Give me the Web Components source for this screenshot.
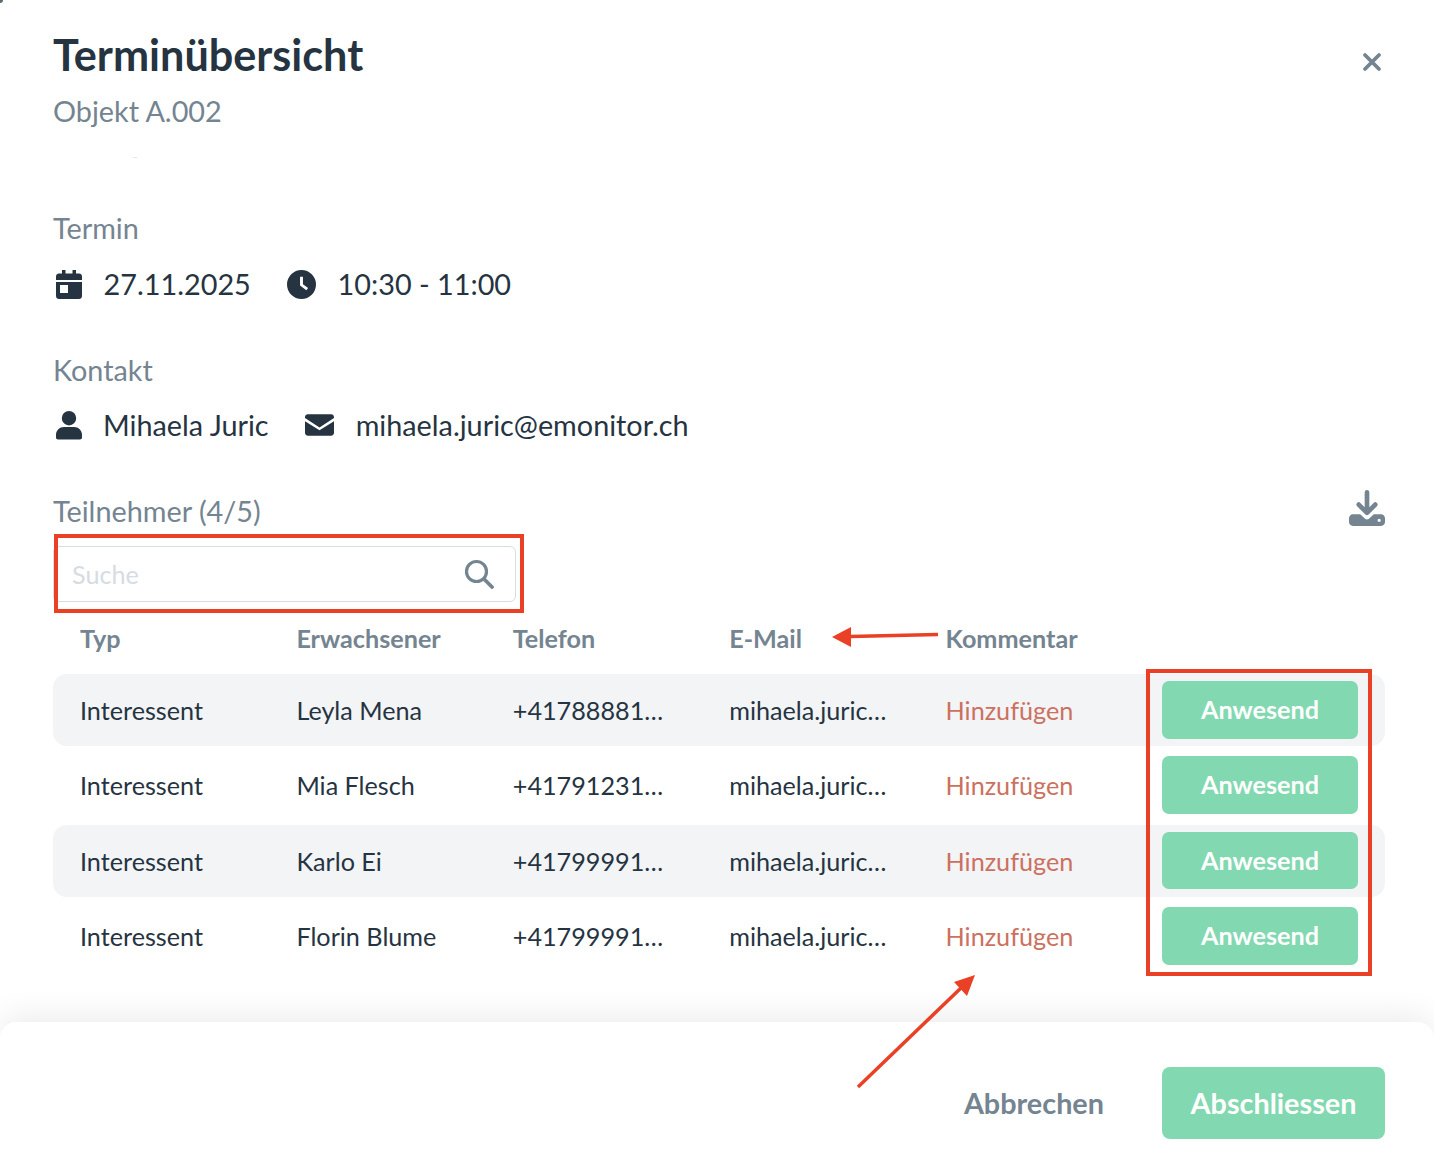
<!DOCTYPE html>
<html lang="de"><head><meta charset="utf-8"><title>Terminübersicht</title>
<style>
html,body{margin:0;padding:0;background:#fff}
body{font-family:Lato,"Open Sans",sans-serif;color:#263442;width:1434px;height:1176px;overflow:hidden}
</style></head><body>
<termin-dialog></termin-dialog>
<template id="t-dialog">
<style>
:host{display:block;position:relative;width:1434px;height:1176px;overflow:hidden;background:#fff}
.body{padding:0 49px 0 53px;display:flex;flex-direction:column}
header{display:flex;justify-content:space-between;align-items:flex-start;padding-top:27px}
h1{margin:0;font-size:43.200px;line-height:54px;font-weight:700;color:#263442}
.sub{font-size:28.800px;line-height:36px;color:#748491;margin-top:12px}
.close{margin:23px 1px 0 0;width:24px;height:24px;display:block}
.label{font-size:28.800px;line-height:36px;color:#748491}
.info{display:flex;align-items:center;font-size:28.800px;line-height:40px;color:#263442}
.info svg{display:block;flex:none}
.sec1{margin-top:81px}
.sec2{margin-top:48px}
.sec3{margin-top:48px;display:flex;justify-content:space-between;align-items:center}
.rows{display:flex;flex-direction:column;gap:3.400px}
footer{position:absolute;left:0;right:0;top:1022px;bottom:0;background:#fff;border-radius:16px 16px 0 0;box-shadow:0 -8px 30px rgba(0,0,0,.07);display:flex;justify-content:flex-end;align-items:flex-start;padding:45px 49px 0 0;gap:58px}
.ab{font-size:28.800px;font-weight:700;color:#748491;line-height:72px}
.go{width:223px;height:72px;background:#82d8b0;border-radius:8px;color:#fff;font-size:28.800px;font-weight:700;line-height:72px;text-align:center}
.note{position:absolute;border:4px solid #ea4025;box-sizing:border-box;pointer-events:none}
.arrows{position:absolute;left:0;top:0;pointer-events:none}
.speck{position:absolute;left:133px;top:157px;width:4px;height:1px;background:#e6e6e6}
.corner{position:absolute;left:0;top:0;width:3px;height:3px;background:#5a6a76;border-bottom-right-radius:3px}
</style>
<div class="body">
<header><div><h1>Terminübersicht</h1><div class="sub">Objekt A.002</div></div>
<svg class="close" viewBox="0 0 24 24"><path d="M5 5L19 19M19 5L5 19" stroke="#748491" stroke-width="3.800" stroke-linecap="round" fill="none"/></svg></header>
<div class="sec1 label">Termin</div>
<div class="info" style="margin-top:18px">
<svg width="26" height="29" viewBox="0 0 26 29" style="margin-left:3px"><path fill="#263442" fill-rule="evenodd" d="M6 0h3.500v3.500h7V0H20v3.500h3c1.700 0 3 1.300 3 3V10H0V6.500c0-1.700 1.300-3 3-3h3zM0 12h26v14c0 1.700-1.300 3-3 3H3c-1.700 0-3-1.300-3-3zM4 15v8h8v-8z"/></svg>
<span style="margin-left:21.600px">27.11.2025</span>
<svg width="29" height="29" viewBox="0 0 30 30" style="margin-left:36.400px"><path fill="#263442" fill-rule="evenodd" d="M15 0a15 15 0 1 1 0 30a15 15 0 0 1 0-30zM13.500 7v9l6.500 5 1.800-2.300-5.300-4V7z"/></svg>
<span style="margin-left:21.400px">10:30 - 11:00</span></div>
<div class="sec2 label">Kontakt</div>
<div class="info" style="margin-top:17px">
<svg width="26" height="30" viewBox="0 0 26 30" style="margin-left:3px"><path fill="#263442" d="M13 1a7.200 7.200 0 1 1 0 14.400a7.200 7.200 0 0 1 0-14.400zM8 17h10c4.500 0 8 3.500 8 7.800V27.500c0 1-.8 2-2 2H2c-1.200 0-2-1-2-2v-2.700C0 20.500 3.500 17 8 17z"/></svg>
<span style="margin-left:21px">Mihaela Juric</span>
<svg width="29" height="22" viewBox="0 0 30 22" style="margin-left:36px"><path fill="#263442" d="M3 0h24c1.700 0 3 1.300 3 3v.8L15 13.500 0 3.800V3c0-1.700 1.300-3 3-3zM0 7l15 9.500L30 7v12c0 1.700-1.300 3-3 3H3c-1.700 0-3-1.300-3-3z"/></svg>
<span style="margin-left:22px">mihaela.juric@emonitor.ch</span></div>
<div class="sec3"><span class="label">Teilnehmer (4/5)</span>
<svg width="36" height="36" viewBox="0 0 37 37" style="margin-top:-6px"><path d="M18.500 2.500v18.500M10 15l8.500 8.500L27 15" stroke="#748491" stroke-width="4.800" stroke-linecap="round" stroke-linejoin="round" fill="none"/><path fill="#748491" fill-rule="evenodd" d="M4 25h7.500l5 4.500c1.200 1 2.800 1 4 0l5-4.500H33c2.200 0 4 1.800 4 4v4c0 2.200-1.800 4-4 4H4c-2.200 0-4-1.800-4-4v-4c0-2.200 1.800-4 4-4zM31 29.500a1.700 1.700 0 1 0 0 3.400a1.700 1.700 0 0 0 0-3.400z"/></svg></div>
<search-box></search-box>
<part-head></part-head>
<div class="rows">
<part-row striped name="Leyla Mena" tel="+41788881…"></part-row>
<part-row name="Mia Flesch" tel="+41791231…"></part-row>
<part-row striped name="Karlo Ei" tel="+41799991…"></part-row>
<part-row name="Florin Blume" tel="+41799991…"></part-row>
</div>
</div>
<footer><span class="ab">Abbrechen</span><span class="go">Abschliessen</span></footer>
<div class="speck"></div>
<div class="corner"></div>
<div class="note" style="left:54px;top:534px;width:470px;height:79px"></div>
<div class="note" style="left:1146px;top:669px;width:226px;height:307px"></div>
<svg class="arrows" width="1434" height="1176" viewBox="0 0 1434 1176">
<path d="M938 634.500L850 636.500" stroke="#ea4025" stroke-width="3.500" fill="none"/>
<path d="M832 637L851 627V647Z" fill="#ea4025"/>
<path d="M858 1087L962 987" stroke="#ea4025" stroke-width="3.500" fill="none"/>
<path d="M975 975L954 982L967 996Z" fill="#ea4025"/>
</svg>
</template>
<template id="t-search">
<style>
:host{display:block;width:463px;height:56px;margin-top:17px;box-sizing:border-box;border:1px solid #d8dde3;border-radius:6px;background:#fff}
.in{display:flex;align-items:center;justify-content:space-between;height:100%;padding:0 21px 0 18px;font-size:25.200px;color:#d6dce2}
svg{display:block}
</style><div class="in"><span>Suche</span>
<svg width="30" height="30" viewBox="0 0 30 30"><circle cx="12.500" cy="12.500" r="10" fill="none" stroke="#748491" stroke-width="3.200"/><path d="M20 20L28 28" stroke="#748491" stroke-width="3.800" stroke-linecap="round"/></svg></div>
</template>
<template id="t-head">
<style>
:host{display:grid;grid-template-columns:216.400px 216.400px 216.400px 216.400px 1fr;padding-left:27px;height:66px;margin-top:6px;font-size:25.200px;font-weight:700;color:#748491;line-height:60px}
</style><span>Typ</span><span>Erwachsener</span><span>Telefon</span><span>E-Mail</span><span>Kommentar</span>
</template>
<template id="t-row">
<style>
:host{display:grid;grid-template-columns:216.400px 216.400px 216.400px 216.400px 1fr 196px;align-items:center;height:72px;padding:0 27px;border-radius:14px;font-size:25.200px;color:#263442;box-sizing:border-box}
:host([striped]){background:#f3f4f6}
.add{color:#cc7160}
.btn{height:57.500px;line-height:57.500px;background:#82d8b0;color:#fff;font-weight:700;border-radius:7px;text-align:center;margin-top:-.500px}
</style><span>Interessent</span><span id="n"></span><span id="t"></span><span>mihaela.juric…</span><span class="add">Hinzufügen</span><span class="btn">Anwesend</span>
</template>
<script>
function mk(name,tid,init){customElements.define(name,class extends HTMLElement{constructor(){super();const r=this.attachShadow({mode:'open'});r.appendChild(document.getElementById(tid).content.cloneNode(true));}connectedCallback(){if(init)init(this)}})}
mk('search-box','t-search');mk('part-head','t-head');
mk('part-row','t-row',e=>{e.shadowRoot.getElementById('n').textContent=e.getAttribute('name');e.shadowRoot.getElementById('t').textContent=e.getAttribute('tel')});
mk('termin-dialog','t-dialog');
</script>
</body></html>
